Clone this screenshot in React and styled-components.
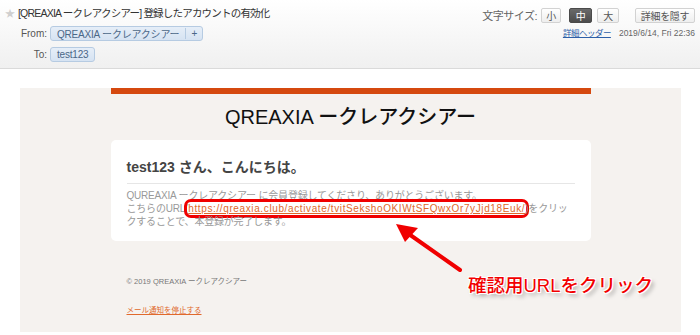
import React from 'react'
import styled, { createGlobalStyle } from 'styled-components'

const GlobalStyle = createGlobalStyle`
  html, body {
    margin: 0;
    padding: 0;
    background: #ffffff;
    font-family: "Liberation Sans", "Noto Sans CJK JP", sans-serif;
  }
`

const jp = `"Liberation Sans", "Noto Sans CJK JP", sans-serif`

const Page = styled.div`
  width: 700px;
  height: 335px;
  position: relative;
  overflow: hidden;
  background: #fff;
`

const Header = styled.header`
  box-sizing: border-box;
  height: 69px;
  padding: 3px 5px 0 5px;
  display: flex;
  justify-content: space-between;
  background: linear-gradient(#ffffff, #f0f0f0);
  border-bottom: 1px solid #dadada;
`

const HeadLeft = styled.div`
  display: flex;
  flex-direction: column;
`

const Subject = styled.div`
  display: flex;
  align-items: center;
  gap: 3px;
  height: 18px;
  font-size: 10.5px;
  letter-spacing: -0.8px;
  color: #333;
  white-space: nowrap;
`

const Star = styled.span`
  color: #cfcfcf;
  font-size: 10px;
  letter-spacing: 0;
`

const InfoGrid = styled.div`
  margin-top: 5px;
  display: grid;
  grid-template-columns: 42px auto;
  column-gap: 3px;
  row-gap: 6px;
  align-items: center;
  justify-items: start;
`

const Label = styled.span`
  justify-self: end;
  font-size: 10px;
  color: #555;
`

const Chip = styled.span`
  display: inline-flex;
  align-items: center;
  height: 13px;
  border: 1px solid #b6cbe2;
  border-radius: 3px;
  background: linear-gradient(#e6eef8, #d6e3f2);
  color: #4b6787;
  font-size: 10px;
  letter-spacing: -0.2px;
  white-space: nowrap;
`

const ChipPart = styled.span`
  padding: 0 ${p => (p.$narrow ? '5px' : '6px')};
  & + & {
    border-left: 1px solid #b6cbe2;
  }
`

const HeadRight = styled.div`
  display: flex;
  flex-direction: column;
  align-items: flex-end;
`

const SizeRow = styled.div`
  margin-top: 4px;
  display: flex;
  align-items: center;
  font-size: 11px;
  color: #666;
  white-space: nowrap;
`

const SizeLabel = styled.span`
  margin-right: 4px;
  letter-spacing: -0.5px;
`

const SizeButton = styled.span`
  box-sizing: border-box;
  display: inline-flex;
  align-items: center;
  justify-content: center;
  height: 15px;
  width: ${p => p.$w}px;
  margin-left: ${p => p.$gap || 0}px;
  font-size: 10px;
  border: 1px solid ${p => (p.$on ? '#4a4a4a' : '#d2d2d2')};
  border-radius: 2px;
  background: ${p => (p.$on ? 'linear-gradient(#6a6a6a, #4c4c4c)' : 'linear-gradient(#ffffff, #eeeeee)')};
  color: ${p => (p.$on ? '#fff' : '#555')};
  letter-spacing: -0.3px;
`

const MetaRow = styled.div`
  margin-top: 5px;
  display: flex;
  gap: 8px;
  font-size: 8.5px;
  line-height: 10px;
  color: #666;
  white-space: nowrap;
`

const HeaderLink = styled.span`
  color: #2e5fa8;
  text-decoration: underline;
  letter-spacing: -0.5px;
`

const Main = styled.main`
  padding: 19px 19px 0 20px;
`

const Panel = styled.div`
  background: #f5f2ef;
  height: 244px;
`

const Column = styled.div`
  width: 480px;
  margin: 0 auto;
  display: flex;
  flex-direction: column;
`

const Bar = styled.div`
  height: 6px;
  background: #d5490f;
`

const Title = styled.h1`
  margin: 11px 0 11px;
  font-size: 20px;
  line-height: 24px;
  font-weight: 500;
  color: #111;
  text-align: center;
  font-family: ${jp};
`

const Card = styled.div`
  background: #fff;
  border-radius: 5px;
  padding: 17px 16px 13px;
`

const Greeting = styled.div`
  font-size: 14px;
  line-height: 20px;
  font-weight: bold;
  color: #444;
`

const Divider = styled.hr`
  margin: 6px 0 5px;
  border: 0;
  border-top: 1px solid #e6e6e6;
`

const Body = styled.p`
  margin: 0;
  font-size: 10px;
  line-height: 13px;
  color: #999;
  letter-spacing: -0.2px;
`

const Marked = styled.span`
  border: 3px solid #f00000;
  border-radius: 7px;
  padding: 1px 1px;
  margin: 0 -4px;
`

const BodyLink = styled.span`
  color: #e0692c;
  text-decoration: underline;
  letter-spacing: 0.62px;
`

const Foot = styled.div`
  padding-left: 16px;
  font-size: 7.5px;
  line-height: 10px;
  color: ${p => (p.$link ? '#e0692c' : '#777')};
  text-decoration: ${p => (p.$link ? 'underline' : 'none')};
  margin-top: ${p => p.$top}px;
`

const Callout = styled.div`
  position: absolute;
  left: 468px;
  top: 274px;
  font-size: 18.5px;
  line-height: 24px;
  font-weight: 500;
  color: #f20000;
  white-space: nowrap;
  text-shadow: 0 0 2px #fff, 1px 1px 0 #fff, -1px -1px 0 #fff, 1px -1px 0 #fff, -1px 1px 0 #fff,
    3px 3px 4px rgba(0, 0, 0, 0.35);
`

const ArrowSvg = styled.svg`
  position: absolute;
  left: 0;
  top: 0;
  pointer-events: none;
`

export default function App() {
  return (
    <Page>
      <GlobalStyle />
      <Header>
        <HeadLeft>
          <Subject>
            <Star>★</Star>
            [QREAXIA ークレアクシアー] 登録したアカウントの有効化
          </Subject>
          <InfoGrid>
            <Label>From:</Label>
            <Chip>
              <ChipPart>QREAXIA ークレアクシアー</ChipPart>
              <ChipPart $narrow>+</ChipPart>
            </Chip>
            <Label>To:</Label>
            <Chip>
              <ChipPart>test123</ChipPart>
            </Chip>
          </InfoGrid>
        </HeadLeft>
        <HeadRight>
          <SizeRow>
            <SizeLabel>文字サイズ:</SizeLabel>
            <SizeButton $w={20}>小</SizeButton>
            <SizeButton $w={23} $gap={8} $on>中</SizeButton>
            <SizeButton $w={22} $gap={5}>大</SizeButton>
            <SizeButton $w={60} $gap={16}>詳細を隠す</SizeButton>
          </SizeRow>
          <MetaRow>
            <HeaderLink>詳細ヘッダー</HeaderLink>
            <span>2019/6/14, Fri 22:36</span>
          </MetaRow>
        </HeadRight>
      </Header>

      <Main>
        <Panel>
          <Column>
            <Bar />
            <Title>QREAXIA ークレアクシアー</Title>
            <Card>
              <Greeting>test123 さん、こんにちは。</Greeting>
              <Divider />
              <Body>
                QUREAXIA ークレアクシアー に会員登録してくださり、ありがとうございます。
                <br />
                こちらのURL(
                <Marked>
                  <BodyLink>https://qreaxia.club/activate/tvitSekshoOKIWtSFQwxOr7yJjd18Euk/</BodyLink>
                </Marked>
                )をクリックすることで、本登録が完了します。
              </Body>
            </Card>
            <Foot $top={36}>© 2019 QREAXIA ークレアクシアー</Foot>
            <Foot $top={19} $link>
              メール通知を停止する
            </Foot>
          </Column>
        </Panel>
      </Main>

      <ArrowSvg width="700" height="335" viewBox="0 0 700 335">
        <line x1="460" y1="270" x2="406" y2="232" stroke="#f00000" strokeWidth="4" strokeLinecap="round" />
        <polygon points="396,224 418,228 405,242" fill="#f00000" />
      </ArrowSvg>
      <Callout>確認用URLをクリック</Callout>
    </Page>
  )
}
